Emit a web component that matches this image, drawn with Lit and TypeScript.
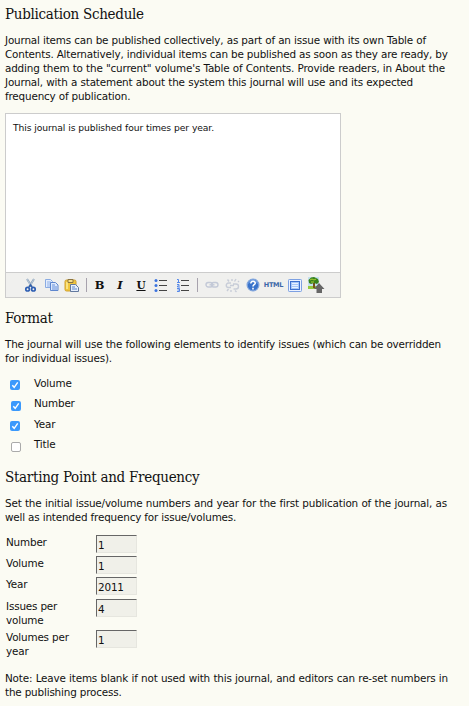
import { LitElement, html, css, svg } from "lit";
import { customElement } from "lit/decorators.js";

const cut = html`<svg width="13" height="14" viewBox="0 0 13 14"><path d="M3 1l5 8M10 1L5 9" stroke="#8da4bd" stroke-width="2" fill="none"/><path d="M3 1l4 7M10 1L6 8" stroke="#c7d2de" stroke-width=".8"/><ellipse cx="3.6" cy="11.2" rx="1.8" ry="1.8" fill="none" stroke="#2f5fb3" stroke-width="1.7"/><ellipse cx="9.4" cy="11.2" rx="1.8" ry="1.8" fill="none" stroke="#2f5fb3" stroke-width="1.7"/><path d="M5 9l1.500-2L8 9" stroke="#315ea8" stroke-width="1.500" fill="none"/></svg>`;
const copy = html`<svg width="15" height="14" viewBox="0 0 15 14"><path d="M1.500 1.500h5l2 2v6h-7z" fill="#e3edfd" stroke="#8aabe2"/><path d="M3 4h4M3 6h4M3 8h3" stroke="#8fb0e8"/><path d="M6.500 4.500h5l2.500 2.500v5.500H6.500z" fill="#dce8fc" stroke="#5e86ce"/><path d="M8 7h3M8 9h5M8 11h5" stroke="#6690dc"/></svg>`;
const paste = html`<svg width="16" height="15" viewBox="0 0 16 15"><rect x="1" y="2" width="11" height="11" rx="1.500" fill="#f0c63d" stroke="#d0a030"/><path d="M2 4h2v7H2z" fill="#fae382"/><path d="M4 1.500h5v3H4z" fill="#f6df8b" stroke="#8b7440"/><path d="M6.500 6.500h5l3 3v4h-8z" fill="#e6effc" stroke="#62799f"/><path d="M8 9h3M8 11h5" stroke="#5e86ca"/></svg>`;
const bullets = html`<svg width="14" height="14" viewBox="0 0 14 14"><path d="M5 2.500h8M5 7.500h8M5 12.500h8" stroke="#444"/><g fill="#3b73df"><circle cx="2" cy="2.500" r="1.500"/><circle cx="2" cy="7.500" r="1.500"/><circle cx="2" cy="12.500" r="1.500"/></g></svg>`;
const numbers = html`<svg width="14" height="14" viewBox="0 0 14 14"><path d="M5 2.500h8M5 7.500h8M5 12.500h8" stroke="#444"/><path d="M1 1.500h1.500V4M1 4.500h3M1 6.500h2v1.500H1.500v1H4M1 10.500h2.500v3H1M1.500 12H3" fill="none" stroke="#5688e9"/></svg>`;
const chain = svg`<rect x="1" y="4.500" width="6.500" height="4.500" rx="2.200"/><rect x="6.500" y="4.500" width="6.500" height="4.500" rx="2.200"/><path d="M4.500 6.800h5"/>`;
const link = html`<svg width="14" height="14" viewBox="0 0 14 14" fill="none" stroke="#c3c9d7" stroke-width="1.400">${chain}</svg>`;
const unlink = html`<svg width="15" height="15" viewBox="0 0 15 15" fill="none" stroke="#c8cdd8" stroke-width="1.400"><path d="M6 5H3.500a2.200 2.200 0 0 0 0 4.500H6M8 6h3a2 2 0 0 1 0 5H8.500M5 7.500h4M7 1v2M11 1L9.500 3.500M2.500 1.500L4 3.500M6 12v2M3.500 11L2 13M10 12.500l1.500 1.500M13 4l1-1"/></svg>`;
const help = html`<svg width="14" height="14" viewBox="0 0 14 14"><circle cx="7" cy="7" r="5.900" fill="#3973cb" stroke="#83a6dc" stroke-width="1.200"/><path d="M2.500 5.500a4.700 4.700 0 0 1 9 0" fill="none" stroke="#75a4e7"/><path d="M4.800 5.400c0-3 4.600-2.600 4.400-.2C9.100 6.800 7 6.700 7 8.500M7 9.800v1.700" fill="none" stroke="#fff" stroke-width="1.600"/></svg>`;
const screen = html`<svg width="14" height="13" viewBox="0 0 14 13"><rect x=".5" y=".5" width="13" height="12" rx=".8" fill="#edf3ff" stroke="#7da0e2"/><rect x="2.500" y="2.500" width="9" height="8" fill="#a8c7f8" stroke="#3d70cf"/><path d="M4 4.500h6M4 6.500h6M4 8.500h6" stroke="#e9f2ff"/></svg>`;
const picture = html`<svg width="18" height="18" viewBox="0 0 18 18"><rect x="1" y="1" width="11" height="12" fill="#c4e0ef"/><path d="M1 10h11v3H1z" fill="#94ca3e"/><path d="M6 6h2v6H6z" fill="#76521e"/><path d="M1.500 4L4 1.500 7 1l4 2 1 3-2 2-3-1-3 1-2-1z" fill="#39821c"/><path d="M3 4l2-1 2 1 2-1M4 6h3" stroke="#a8cf34" fill="none"/><path d="M12 7l5.500 6H15v4H9.500v-4H7z" fill="#666"/></svg>`;

@customElement("app-root")
export class AppRoot extends LitElement {
  static styles = css`
    :host { display: block; box-sizing: border-box; height: 706px; padding-left: 5px; overflow: hidden; background: #fbfbf3; color: #111; font: 10.4px/14px "DejaVu Sans", sans-serif; letter-spacing: -.17px; }
    h3 { margin: 0; height: 29px; font: 15px/20px "DejaVu Serif Condensed", "DejaVu Serif", serif; font-stretch: condensed; white-space: nowrap; color: #111; letter-spacing: -.29px; }
    .first { padding-top: 4px; }
    p { margin: 0; }
    .line { display: block; white-space: nowrap; text-align: justify; text-align-last: justify; }
    .editor { box-sizing: border-box; width: 336px; height: 185px; margin: 10px 0; border: 1px solid #ccc; background: #fff; display: flex; flex-direction: column; }
    .content { flex: 1; padding: 7px; font-size: 9.2px; letter-spacing: -.1px; }
    .toolbar { height: 24px; border-top: 1px solid #ccc; background: #f0f0ee; padding-left: 14px; display: grid; grid-template-columns: 21px 21px 19px 10px 17px 24px 18px 22px 21px 9px 19px 22px 19px 23px 19px 23px; place-items: center; }
    .toolbar svg { display: block; }
    .sep { width: 1px; height: 14px; background: #a7a2ad; }
    .glyph { font: bold 11.5px/14px "DejaVu Serif", serif; color: #111; letter-spacing: 0; }
    .italic { font-style: italic; }
    .under { font-size: 10.5px; text-decoration: underline; }
    .html { font: bold 6.5px/8px "DejaVu Sans", sans-serif; color: #3d67a8; letter-spacing: -.3px; }
    .checks { box-sizing: border-box; display: grid; grid-template-rows: 20px 21px 20px 20px; padding: 11px 0 0 5px; height: 102px; }
    .check { display: flex; }
    .box { box-sizing: border-box; width: 10px; height: 10px; margin: 4px 14px 0 0; border-radius: 2px; background: #3b99fc; }
    .shift { margin: 5px 13px 0 1px; }
    .empty { background: #fff; border: 1px solid #aaa; }
    .box svg { display: block; }
    .fields { display: grid; grid-template-rows: 21px 21px 22px 31px 31px; padding: 11px 0 10px 1px; }
    .field { display: grid; grid-template-columns: 90px 41px; align-items: start; }
    .name { width: 66px; }
    input { box-sizing: border-box; width: 41px; height: 18px; margin: 0; padding: 1px 1px 0; border: 1px solid #e6e6df; border-top-color: #666; border-left-color: #666; border-radius: 0; background: #f0f0e9; color: #111; font: 10.4px "DejaVu Sans", sans-serif; letter-spacing: -.17px; outline: none; }
  `;

  private lines(items: [string, number][]) {
    return html`<p>${items.map(([text, width]) => html`<span class="line" style="width:${width}px">${text}</span>`)}</p>`;
  }

  render() {
    const sep = html`<span class="sep"></span>`;
    return html`
      <h3 class="first">Publication Schedule</h3>
      ${this.lines([
        ["Journal items can be published collectively, as part of an issue with its own Table of", 421],
        ["Contents. Alternatively, individual items can be published as soon as they are ready, by", 442],
        ["adding them to the \"current\" volume's Table of Contents. Provide readers, in About the", 440],
        ["Journal, with a statement about the system this journal will use and its expected", 408],
        ["frequency of publication.", 124],
      ])}
      <div class="editor">
        <div class="content"><span class="line" style="width:201px">This journal is published four times per year.</span></div>
        <div class="toolbar">
          ${cut}${copy}${paste}${sep}
          <span class="glyph">B</span><span class="glyph italic">I</span><span class="glyph under">U</span>
          ${bullets}${numbers}${sep}${link}${unlink}${help}
          <span class="html">HTML</span>${screen}${picture}
        </div>
      </div>
      <h3>Format</h3>
      ${this.lines([
        ["The journal will use the following elements to identify issues (which can be overridden", 436],
        ["for individual issues).", 107],
      ])}
      <div class="checks">
        ${["Volume", "Number", "Year", "Title"].map((name, i) => html`
          <div class="check"><span class="box ${i % 2 ? "shift" : ""} ${i === 3 ? "empty" : ""}">${i < 3 ? html`<svg width="10" height="10" viewBox="0 0 10 10"><path d="M2.300 5.200l1.900 2.100L7.700 2.400" fill="none" stroke="#fff" stroke-width="1.400"/></svg>` : ""}</span><span>${name}</span></div>`)}
      </div>
      <h3>Starting Point and Frequency</h3>
      ${this.lines([
        ["Set the initial issue/volume numbers and year for the first publication of the journal, as", 442],
        ["well as intended frequency for issue/volumes.", 231],
      ])}
      <div class="fields">
        ${[["Number", "1"], ["Volume", "1"], ["Year", "2011"], ["Issues per volume", "4"], ["Volumes per year", "1"]].map(([name, value]) => html`
          <label class="field"><span class="name">${name}</span><input .value=${value}></label>`)}
      </div>
      ${this.lines([
        ["Note: Leave items blank if not used with this journal, and editors can re-set numbers in", 443],
        ["the publishing process.", 116],
      ])}`;
  }
}
